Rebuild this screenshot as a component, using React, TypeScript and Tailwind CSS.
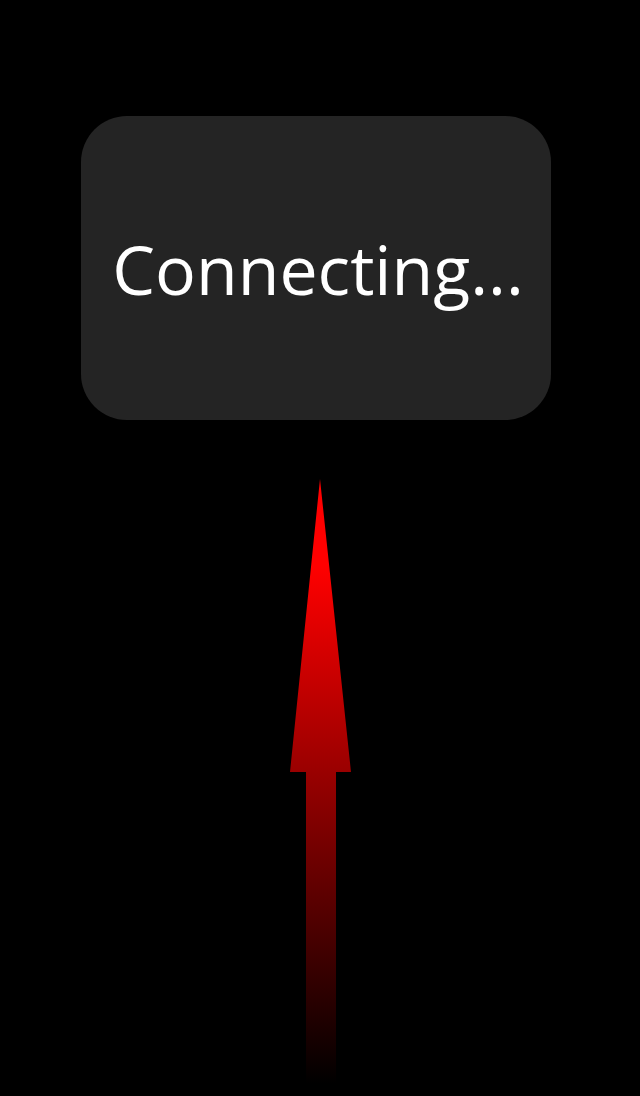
export default function App() {
  return (
    <div className="flex h-[1096px] w-[640px] flex-col bg-black pt-[116px]">
      <div className="ml-[81px] flex h-[304px] w-[470px] items-center justify-center rounded-[46px] bg-[#242424]">
        <span
          className="pl-[4px] pt-[2px] text-[68px] font-normal leading-none text-white"
          style={{ fontFamily: '"Open Sans", "Noto Sans", sans-serif' }}
        >
          Connecting...
        </span>
      </div>
      <svg className="ml-[289px] mt-[59px]" width="64" height="617" viewBox="0 0 64 617">
        <defs>
          <linearGradient id="arrowFade" x1="0" y1="0" x2="0" y2="617" gradientUnits="userSpaceOnUse">
            <stop offset="0" stopColor="#ff0000" />
            <stop offset="0.14" stopColor="#ff0000" />
            <stop offset="0.98" stopColor="#000000" />
          </linearGradient>
        </defs>
        <path d="M31 0 L62 293 L47 293 L47 617 L17 617 L17 293 L1 293 Z" fill="url(#arrowFade)" />
      </svg>
    </div>
  );
}
